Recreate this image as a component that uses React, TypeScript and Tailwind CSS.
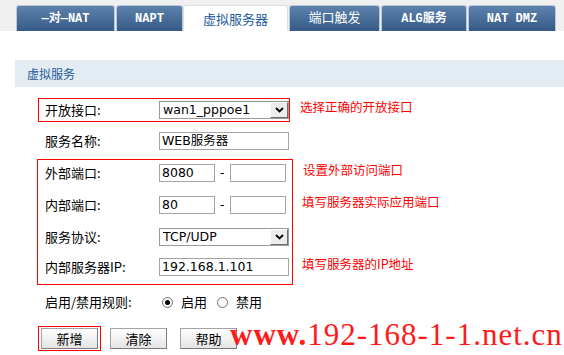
import React from 'react'

const tabs = [
  { name: '—对—NAT', cls: 'ml-[16px] w-[99px] font-bold' },
  { name: 'NAPT', cls: 'ml-[1px] w-[67px] font-bold' },
  { name: '虚拟服务器', cls: 'w-[105px]', active: true },
  { name: '端口触发', cls: 'ml-[1px] w-[91px] font-normal text-[13px]' },
  { name: 'ALG服务', cls: 'ml-[1px] w-[86px] font-bold' },
  { name: 'NAT DMZ', cls: 'ml-[1px] w-[88px] font-bold' },
]

const cjk = "font-['Noto_Sans_CJK_SC',sans-serif]"
const field = "font-['DejaVu_Sans','Noto_Sans_CJK_SC',sans-serif] text-[12.5px] text-black"

function Input({ value, cls }: { value?: string; cls: string }) {
  return (
    <div className={`h-[18px] border border-[#a5a5a5] bg-white flex items-center pl-[2px] ${field} ${cls}`}>
      {value}
    </div>
  )
}

function Select({ value }: { value: string }) {
  return (
    <div className={`w-[130px] h-[18px] border border-[#9a9a9a] bg-white flex items-center ${field}`}>
      <span className="flex-1 pl-[3px]">{value}</span>
      <div className="w-[18px] h-[16px] bg-[#ececec] border border-t-white border-l-white border-r-[#6d6d6d] border-b-[#6d6d6d] flex items-center justify-center">
        <svg width="9" height="6" viewBox="0 0 9 6">
          <path d="M1 1l3.5 3.5L8 1" fill="none" stroke="#000" strokeWidth="1.8" />
        </svg>
      </div>
    </div>
  )
}

function Label({ text }: { text: string }) {
  return <span className={`w-[114px] ${cjk} text-[13px] text-black`}>{text}</span>
}

function Radio({ checked, label }: { checked?: boolean; label: string }) {
  return (
    <span className="flex items-center">
      <span className="w-[11px] h-[11px] rounded-full border border-[#6e6e6e] bg-white flex items-center justify-center">
        {checked && <span className="w-[5px] h-[5px] rounded-full bg-black" />}
      </span>
      <span className={`ml-[8px] ${cjk} text-[13px] text-black`}>{label}</span>
    </span>
  )
}

function Button({ text, cls }: { text: string; cls?: string }) {
  return (
    <div
      className={`w-[57px] h-[21px] border border-[#a3a3a3] border-b-[#7d7d7d] border-r-[#7d7d7d] bg-linear-to-b from-white to-[#e4e4e4] flex items-center justify-center ${cjk} text-[13px] text-black ${cls ?? ''}`}
    >
      {text}
    </div>
  )
}

const note = `${cjk} text-[12.5px] text-[#ff0000]`

export default function App() {
  return (
    <div className="relative w-[564px] h-[355px] bg-white overflow-hidden">
      {/* Tabs */}
      <div className="h-[31px] bg-[#f0f0f0] flex items-end">
        {tabs.map((t) =>
          t.active ? (
            <div
              key={t.name}
              className={`${t.cls} h-[26px] bg-white border border-b-0 border-[#dedede] rounded-t-[3px] flex items-center justify-center ${cjk} text-[13px] text-[#1d5a9c]`}
            >
              {t.name}
            </div>
          ) : (
            <div
              key={t.name}
              className={`h-[26px] rounded-t-[3px] border border-b-0 border-[#b9c8d8] bg-linear-to-b from-[#5c82ad] to-[#365a85] flex items-center justify-center font-['Liberation_Mono','Noto_Sans_CJK_SC',monospace] text-[12px] text-white ${t.cls}`}
            >
              {t.name}
            </div>
          ),
        )}
      </div>

      {/* Section header */}
      <div className={`mt-[29px] ml-[15px] h-[27px] bg-[#e3ebf3] flex items-center pl-[12px] ${cjk} text-[12px] text-[#1d5a9c]`}>
        虚拟服务
      </div>

      <div className="flex">
        {/* Form */}
        <div className="ml-[38px] mt-[11px] flex flex-col">
          <div className="w-[252px] h-[24px] border border-[#ff0000] flex items-center pl-[6px]">
            <Label text="开放接口:" />
            <Select value="wan1_pppoe1" />
          </div>

          <div className="mt-[10px] h-[18px] flex items-center pl-[7px]">
            <Label text="服务名称:" />
            <Input value="WEB服务器" cls="w-[130px]" />
          </div>

          <div className="-ml-[1px] mt-[9px] w-[256px] h-[126px] border border-[#ff0000] flex flex-col pl-[7px]">
            <div className="mt-[4px] h-[18px] flex items-center">
              <Label text="外部端口:" />
              <Input value="8080" cls="w-[56px]" />
              <span className={`mx-[5px] ${field}`}>-</span>
              <Input cls="w-[56px]" />
            </div>
            <div className="mt-[14px] h-[18px] flex items-center">
              <Label text="内部端口:" />
              <Input value="80" cls="w-[56px]" />
              <span className={`mx-[5px] ${field}`}>-</span>
              <Input cls="w-[56px]" />
            </div>
            <div className="mt-[14px] h-[18px] flex items-center">
              <Label text="服务协议:" />
              <Select value="TCP/UDP" />
            </div>
            <div className="mt-[12px] h-[18px] flex items-center">
              <Label text="内部服务器IP:" />
              <Input value="192.168.1.101" cls="w-[130px]" />
            </div>
          </div>

          <div className="mt-[9px] h-[16px] flex items-center pl-[7px]">
            <Label text="启用/禁用规则:" />
            <div className="ml-[3px] flex items-center gap-[10px]">
              <Radio checked label="启用" />
              <Radio label="禁用" />
            </div>
          </div>

          <div className="mt-[16px] flex items-center">
            <div className="w-[63px] h-[25px] border border-[#ff0000] flex items-center justify-center">
              <Button text="新增" />
            </div>
            <Button text="清除" cls="ml-[9px]" />
            <Button text="帮助" cls="ml-[13px]" />
          </div>
        </div>

        {/* Notes */}
        <div className="ml-[7px] flex flex-col">
          <span className={`mt-[12px] h-[16px] leading-[16px] ${note}`}>选择正确的开放接口</span>
          <span className={`ml-[3px] mt-[47px] h-[16px] leading-[16px] ${note}`}>设置外部访问端口</span>
          <span className={`ml-[2px] mt-[16px] h-[16px] leading-[16px] ${note}`}>填写服务器实际应用端口</span>
          <span className={`ml-[2px] mt-[46px] h-[16px] leading-[16px] ${note}`}>填写服务器的IP地址</span>
        </div>
      </div>

      {/* Watermark */}
      <div className="absolute left-[230px] top-[318px] font-['Liberation_Serif',serif] text-[31px] leading-[34px] tracking-[1px] text-[#ff1a1a]">
        <span className="font-bold">www.</span>192-168-1-1.net.cn
      </div>
    </div>
  )
}
